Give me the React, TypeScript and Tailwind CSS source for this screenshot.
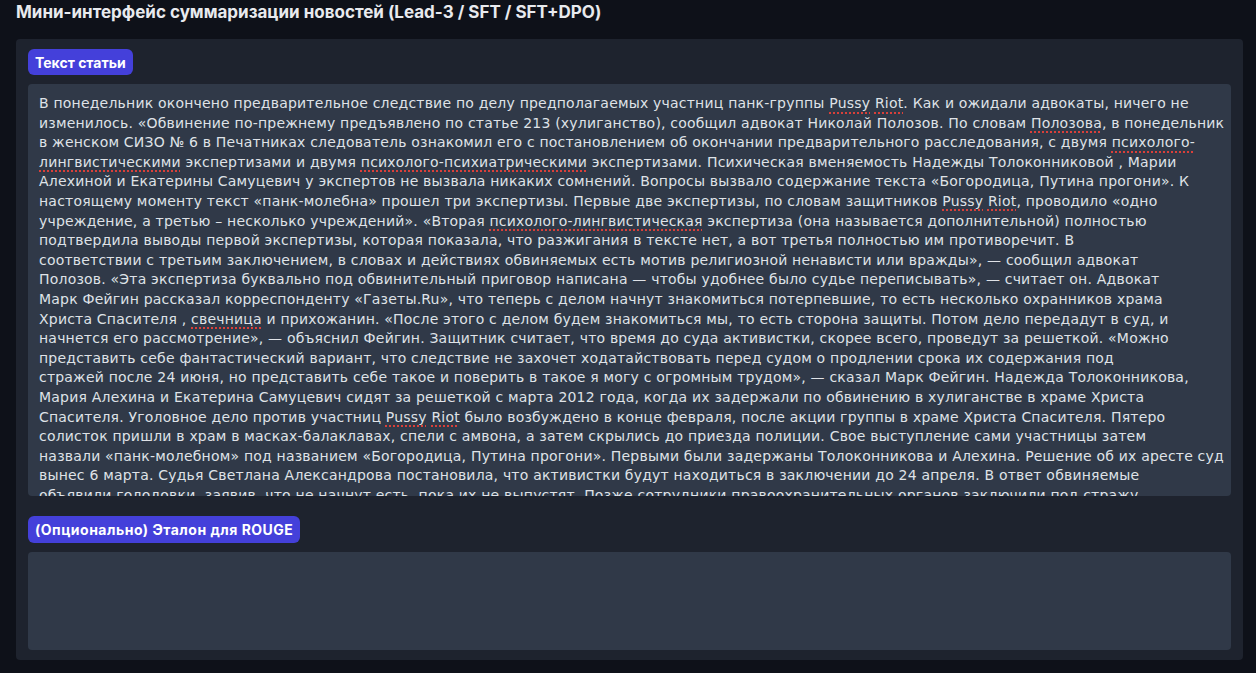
import React from "react";

type Seg = string | { s: string };

const lines: Seg[][] = [
  ["В понедельник окончено предварительное следствие по делу предполагаемых участниц панк-группы ", { s: "Pussy" }, " ", { s: "Riot" }, ". Как и ожидали адвокаты, ничего не"],
  ["изменилось. «Обвинение по-прежнему предъявлено по статье 213 (хулиганство), сообщил адвокат Николай Полозов. По словам ", { s: "Полозова" }, ", в понедельник"],
  ["в женском СИЗО № 6 в Печатниках следователь ознакомил его с постановлением об окончании предварительного расследования, с двумя ", { s: "психолого-" }],
  [{ s: "лингвистическими" }, " экспертизами и двумя ", { s: "психолого-психиатрическими" }, " экспертизами. Психическая вменяемость Надежды Толоконниковой , Марии"],
  ["Алехиной и Екатерины Самуцевич у экспертов не вызвала никаких сомнений. Вопросы вызвало содержание текста «Богородица, Путина прогони». К"],
  ["настоящему моменту текст «панк-молебна» прошел три экспертизы. Первые две экспертизы, по словам защитников ", { s: "Pussy" }, " ", { s: "Riot" }, ", проводило «одно"],
  ["учреждение, а третью – несколько учреждений». «Вторая ", { s: "психолого-лингвистическая" }, " экспертиза (она называется дополнительной) полностью"],
  ["подтвердила выводы первой экспертизы, которая показала, что разжигания в тексте нет, а вот третья полностью им противоречит. В"],
  ["соответствии с третьим заключением, в словах и действиях обвиняемых есть мотив религиозной ненависти или вражды», — сообщил адвокат"],
  ["Полозов. «Эта экспертиза буквально под обвинительный приговор написана — чтобы удобнее было судье переписывать», — считает он. Адвокат"],
  ["Марк Фейгин рассказал корреспонденту «Газеты.Ru», что теперь с делом начнут знакомиться потерпевшие, то есть несколько охранников храма"],
  ["Христа Спасителя , ", { s: "свечница" }, " и прихожанин. «После этого с делом будем знакомиться мы, то есть сторона защиты. Потом дело передадут в суд, и"],
  ["начнется его рассмотрение», — объяснил Фейгин. Защитник считает, что время до суда активистки, скорее всего, проведут за решеткой. «Можно"],
  ["представить себе фантастический вариант, что следствие не захочет ходатайствовать перед судом о продлении срока их содержания под"],
  ["стражей после 24 июня, но представить себе такое и поверить в такое я могу с огромным трудом», — сказал Марк Фейгин. Надежда Толоконникова,"],
  ["Мария Алехина и Екатерина Самуцевич сидят за решеткой с марта 2012 года, когда их задержали по обвинению в хулиганстве в храме Христа"],
  ["Спасителя. Уголовное дело против участниц ", { s: "Pussy" }, " ", { s: "Riot" }, " было возбуждено в конце февраля, после акции группы в храме Христа Спасителя. Пятеро"],
  ["солисток пришли в храм в масках-балаклавах, спели с амвона, а затем скрылись до приезда полиции. Свое выступление сами участницы затем"],
  ["назвали «панк-молебном» под названием «Богородица, Путина прогони». Первыми были задержаны Толоконникова и Алехина. Решение об их аресте суд"],
  ["вынес 6 марта. Судья Светлана Александрова постановила, что активистки будут находиться в заключении до 24 апреля. В ответ обвиняемые"],
  ["объявили голодовки, заявив, что не начнут есть, пока их не выпустят. Позже сотрудники правоохранительных органов заключили под стражу"],
];

function Line({ segs }: { segs: Seg[] }) {
  return (
    <div className="whitespace-pre">
      {segs.map((seg, i) =>
        typeof seg === "string" ? (
          <span key={i}>{seg}</span>
        ) : (
          <span
            key={i}
            className="underline decoration-dotted decoration-[#d9403a] decoration-[1.5px] underline-offset-[4px]"
          >
            {seg.s}
          </span>
        )
      )}
    </div>
  );
}

export default function App() {
  return (
    <div
      className="min-h-screen w-full bg-[#0e1119] pl-4 pr-[13px] pt-[2px]"
      style={{ fontFamily: "Inter, 'Noto Sans', sans-serif" }}
    >
      <h1 className="h-[37px] text-[17px] font-bold leading-[20px] text-[#e8eaee]">
        Мини-интерфейс суммаризации новостей (Lead-3 / SFT / SFT+DPO)
      </h1>
      <div className="flex flex-col rounded-[4px] bg-[#1e232e] px-3 pt-[10px] pb-[10px]">
        <div className="flex">
          <span className="flex h-[26px] items-center rounded-[6px] bg-[#4440da] px-[7px] text-[14px] font-bold text-white">
            Текст статьи
          </span>
        </div>
        <div
          className="mt-[9px] h-[412px] overflow-hidden rounded-[4px] bg-[#303948] px-[11px] pt-[10px] text-[14px] leading-[19.6px] tracking-[0.2px] text-[#dfe2e7]"
          style={{ fontFamily: "'DejaVu Sans', sans-serif" }}
        >
          {lines.map((l, i) => (
            <Line key={i} segs={l} />
          ))}
        </div>
        <div className="mt-[20px] flex">
          <span className="flex h-[27px] items-center rounded-[6px] bg-[#4440da] px-[7px] text-[14px] font-bold tracking-[0.5px] text-white">
            (Опционально) Эталон для ROUGE
          </span>
        </div>
        <div className="mt-[9px] h-[98px] rounded-[4px] bg-[#303948]" />
      </div>
    </div>
  );
}
